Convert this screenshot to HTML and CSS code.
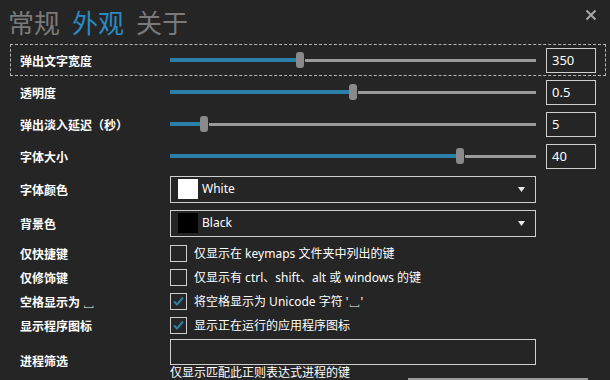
FILE: index.html
```html
<!DOCTYPE html>
<html>
<head>
<meta charset="utf-8">
<link rel="stylesheet" href="styles.css">
</head>
<body>
<div class="window">
  <div class="tabs">
    <span class="tab">常规</span>
    <span class="tab active">外观</span>
    <span class="tab">关于</span>
  </div>
  <svg class="close" width="12" height="12" viewBox="0 0 12 12"><path d="M1.5 1.5 L10.5 10.5 M10.5 1.5 L1.5 10.5" stroke="#a8a8a8" stroke-width="2" fill="none"/></svg>

  <div class="form">
    <div class="row srow focused">
      <div class="label">弹出文字宽度</div>
      <div class="slider"><div class="fill" style="width:126px"></div><div class="thumb"></div><div class="rest"></div></div>
      <div class="num">350</div>
    </div>
    <div class="row srow">
      <div class="label">透明度</div>
      <div class="slider"><div class="fill" style="width:179px"></div><div class="thumb"></div><div class="rest"></div></div>
      <div class="num">0.5</div>
    </div>
    <div class="row srow">
      <div class="label">弹出淡入延迟（秒）</div>
      <div class="slider"><div class="fill" style="width:30px"></div><div class="thumb"></div><div class="rest"></div></div>
      <div class="num">5</div>
    </div>
    <div class="row srow">
      <div class="label">字体大小</div>
      <div class="slider"><div class="fill" style="width:286px"></div><div class="thumb"></div><div class="rest"></div></div>
      <div class="num">40</div>
    </div>
    <div class="row drow">
      <div class="label">字体颜色</div>
      <div class="select">
        <span class="swatch white"></span><span class="opt">White</span>
        <svg class="arrow" width="7" height="5" viewBox="0 0 7 5"><path d="M0 0 H7 L3.5 5 Z" fill="#e8e8e8"/></svg>
      </div>
    </div>
    <div class="row drow">
      <div class="label">背景色</div>
      <div class="select">
        <span class="swatch black"></span><span class="opt">Black</span>
        <svg class="arrow" width="7" height="5" viewBox="0 0 7 5"><path d="M0 0 H7 L3.5 5 Z" fill="#e8e8e8"/></svg>
      </div>
    </div>
    <div class="row crow first">
      <div class="label">仅快捷键</div>
      <span class="box"></span><span class="ctext">仅显示在 keymaps 文件夹中列出的键</span>
    </div>
    <div class="row crow">
      <div class="label">仅修饰键</div>
      <span class="box"></span><span class="ctext">仅显示有 ctrl、shift、alt 或 windows 的键</span>
    </div>
    <div class="row crow">
      <div class="label">空格显示为 ␣</div>
      <span class="box"><svg width="15" height="15" viewBox="0 0 15 15"><path d="M3 7.5 L6 10.5 L12 3.5" stroke="#2c7fa8" stroke-width="2" fill="none"/></svg></span><span class="ctext">将空格显示为 Unicode 字符 '␣'</span>
    </div>
    <div class="row crow">
      <div class="label">显示程序图标</div>
      <span class="box"><svg width="15" height="15" viewBox="0 0 15 15"><path d="M3 7.5 L6 10.5 L12 3.5" stroke="#2c7fa8" stroke-width="2" fill="none"/></svg></span><span class="ctext">显示正在运行的应用程序图标</span>
    </div>
    <div class="row trow">
      <div class="label">进程筛选</div>
      <div class="tcol">
        <div class="textbox"></div>
        <div class="hint">仅显示匹配此正则表达式进程的键</div>
      </div>
    </div>
  </div>
  <div class="hbar"></div>
</div>
</body>
</html>
```

FILE: styles.css
```css
html, body {
  margin: 0;
  padding: 0;
  background: #252525;
  overflow: hidden;
}
body {
  width: 610px;
  height: 380px;
  font-family: "Noto Sans", "Noto Sans CJK SC", sans-serif;
  color: #ffffff;
}
.window {
  position: relative;
  width: 610px;
  height: 380px;
}
.tabs {
  display: flex;
  gap: 12px;
  padding: 3px 0 0 8px;
  height: 44px;
  box-sizing: border-box;
  font-family: "Noto Sans CJK SC", sans-serif;
  font-size: 26px;
  line-height: 38px;
}
.tab { color: #7a7a7a; }
.tab.active { color: #2a8ac4; }
.close {
  position: absolute;
  left: 585px;
  top: 9px;
}
.form {
  margin-left: 10px;
  width: 596px;
}
.row {
  display: flex;
  align-items: center;
  box-sizing: border-box;
  padding-left: 10px;
}
.label {
  width: 150px;
  flex: none;
  font-family: "Noto Sans CJK SC", sans-serif;
  font-weight: 700;
  font-size: 12px;
  color: #ffffff;
}
.srow {
  height: 32px;
  border: 1px solid transparent;
  padding-left: 9px;
}
.srow.focused {
  border: 1px dashed #b4b4b4;
}
.slider {
  width: 366px;
  height: 16px;
  display: flex;
  align-items: center;
  flex: none;
}
.fill {
  height: 4px;
  background: #2b7fa8;
}
.thumb {
  width: 8px;
  height: 16px;
  border-radius: 3px;
  background: #8a8a8a;
  flex: none;
}
.rest {
  flex: 1;
  height: 3px;
  margin-left: 1px;
  background: #9a9a9a;
}
.num {
  margin-left: 10px;
  width: 50px;
  height: 25px;
  box-sizing: border-box;
  border: 1px solid #cfcfcf;
  padding-left: 5px;
  font-size: 13px;
  line-height: 23px;
  color: #ffffff;
}
.drow {
  height: 34px;
}
.select {
  width: 366px;
  height: 27px;
  box-sizing: border-box;
  border: 1px solid #cfcfcf;
  display: flex;
  align-items: center;
  padding-left: 7px;
}
.swatch {
  width: 20px;
  height: 20px;
  flex: none;
}
.swatch.white { background: #ffffff; }
.swatch.black { background: #000000; }
.opt {
  margin-left: 4px;
  font-size: 12px;
  flex: 1;
  margin-top: -2px;
}
.arrow {
  margin-right: 10px;
}
.crow {
  height: 24px;
}
.crow.first {
  margin-top: 1px;
}
.box {
  width: 17px;
  height: 17px;
  box-sizing: border-box;
  border: 1px solid #cfcfcf;
  display: flex;
  align-items: center;
  justify-content: center;
  flex: none;
}
.ctext {
  margin-left: 7px;
  font-size: 12px;
  color: #ffffff;
}
.trow {
  padding-top: 2px;
  align-items: center;
}
.tcol {
  display: flex;
  flex-direction: column;
}
.textbox {
  width: 366px;
  height: 26px;
  box-sizing: border-box;
  border: 1px solid #cfcfcf;
}
.hint {
  font-size: 12px;
  line-height: 16px;
  margin-top: 0;
}
.hbar {
  position: absolute;
  left: 408px;
  top: 378px;
  width: 180px;
  height: 2px;
  background: #9a9a9a;
}
```
